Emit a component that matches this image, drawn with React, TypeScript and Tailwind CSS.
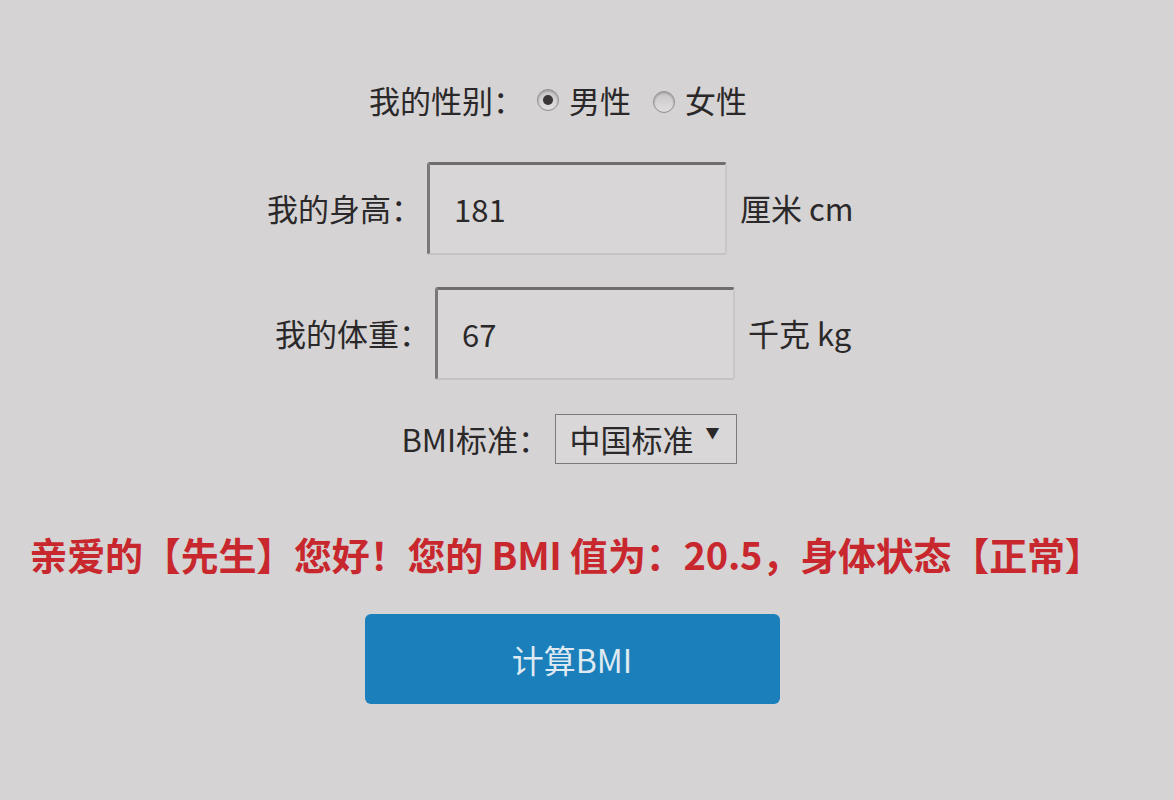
const font = { fontFamily: '"Noto Sans CJK SC", "Noto Sans", sans-serif' };

function Radio({ checked }: { checked: boolean }) {
  return (
    <span className="inline-flex h-[22px] w-[22px] items-center justify-center rounded-full border border-[#8f8d8e] bg-gradient-to-b from-[#c6c4c5] to-[#e2e0e1] shadow-[inset_0_1px_2px_rgba(0,0,0,0.25)]">
      {checked && <span className="h-[10px] w-[10px] rounded-full bg-[#3a3536]" />}
    </span>
  );
}

function NumberField({ label, value, unit }: { label: string; value: string; unit: string }) {
  return (
    <div className="flex items-center">
      <span className="w-[160px]">{label}</span>
      <div className="flex h-[93px] w-[300px] items-center rounded-[3px] border-2 border-t-[3px] border-l-[3px] border-t-[#6f6d6e] border-l-[#7a7879] border-r-[#c9c7c8] border-b-[#c4c2c3] bg-[#d8d6d7] pl-[24px]">
        {value}
      </div>
      <span className="ml-[13px] w-[115px]">{unit}</span>
    </div>
  );
}

export default function App() {
  return (
    <div
      className="flex min-h-[800px] w-full flex-col items-center bg-[#d5d3d4] pr-[44px] text-[31px] text-[#2b2829]"
      style={font}
    >
      <div className="mt-[80px] flex h-[40px] items-center pr-[14px]">
        <span className="w-[168px]">我的性别：</span>
        <Radio checked />
        <span className="ml-[10px]">男性</span>
        <span className="ml-[22px]">
          <Radio checked={false} />
        </span>
        <span className="ml-[10px]">女性</span>
      </div>

      <div className="mt-[42px] pr-[8px]">
        <NumberField label="我的身高：" value="181" unit="厘米 cm" />
      </div>
      <div className="mt-[32px] pl-[8px]">
        <NumberField label="我的体重：" value="67" unit="千克 kg" />
      </div>

      <div className="mt-[34px] flex items-center pl-[8px]">
        <span className="w-[153px]">BMI标准：</span>
        <div className="flex h-[50px] w-[182px] items-center border border-[#7c7a7b] bg-[#d9d7d8] pl-[14px]">
          <span>中国标准</span>
          <span className="ml-[12px] -mt-[14px] text-[14px]">▼</span>
        </div>
      </div>

      <div className="mt-[70px] whitespace-nowrap pl-[2px] text-[38px] font-bold leading-[40px] tracking-[-0.2px] text-[#c8272d]">
        亲爱的【先生】您好！您的 BMI 值为：20.5，身体状态【正常】
      </div>

      <button className="mt-[40px] ml-[14px] flex h-[90px] w-[415px] items-center justify-center rounded-[6px] bg-[#1a7fba] text-[32px] text-[#dfe9f1]">
        计算BMI
      </button>
    </div>
  );
}
